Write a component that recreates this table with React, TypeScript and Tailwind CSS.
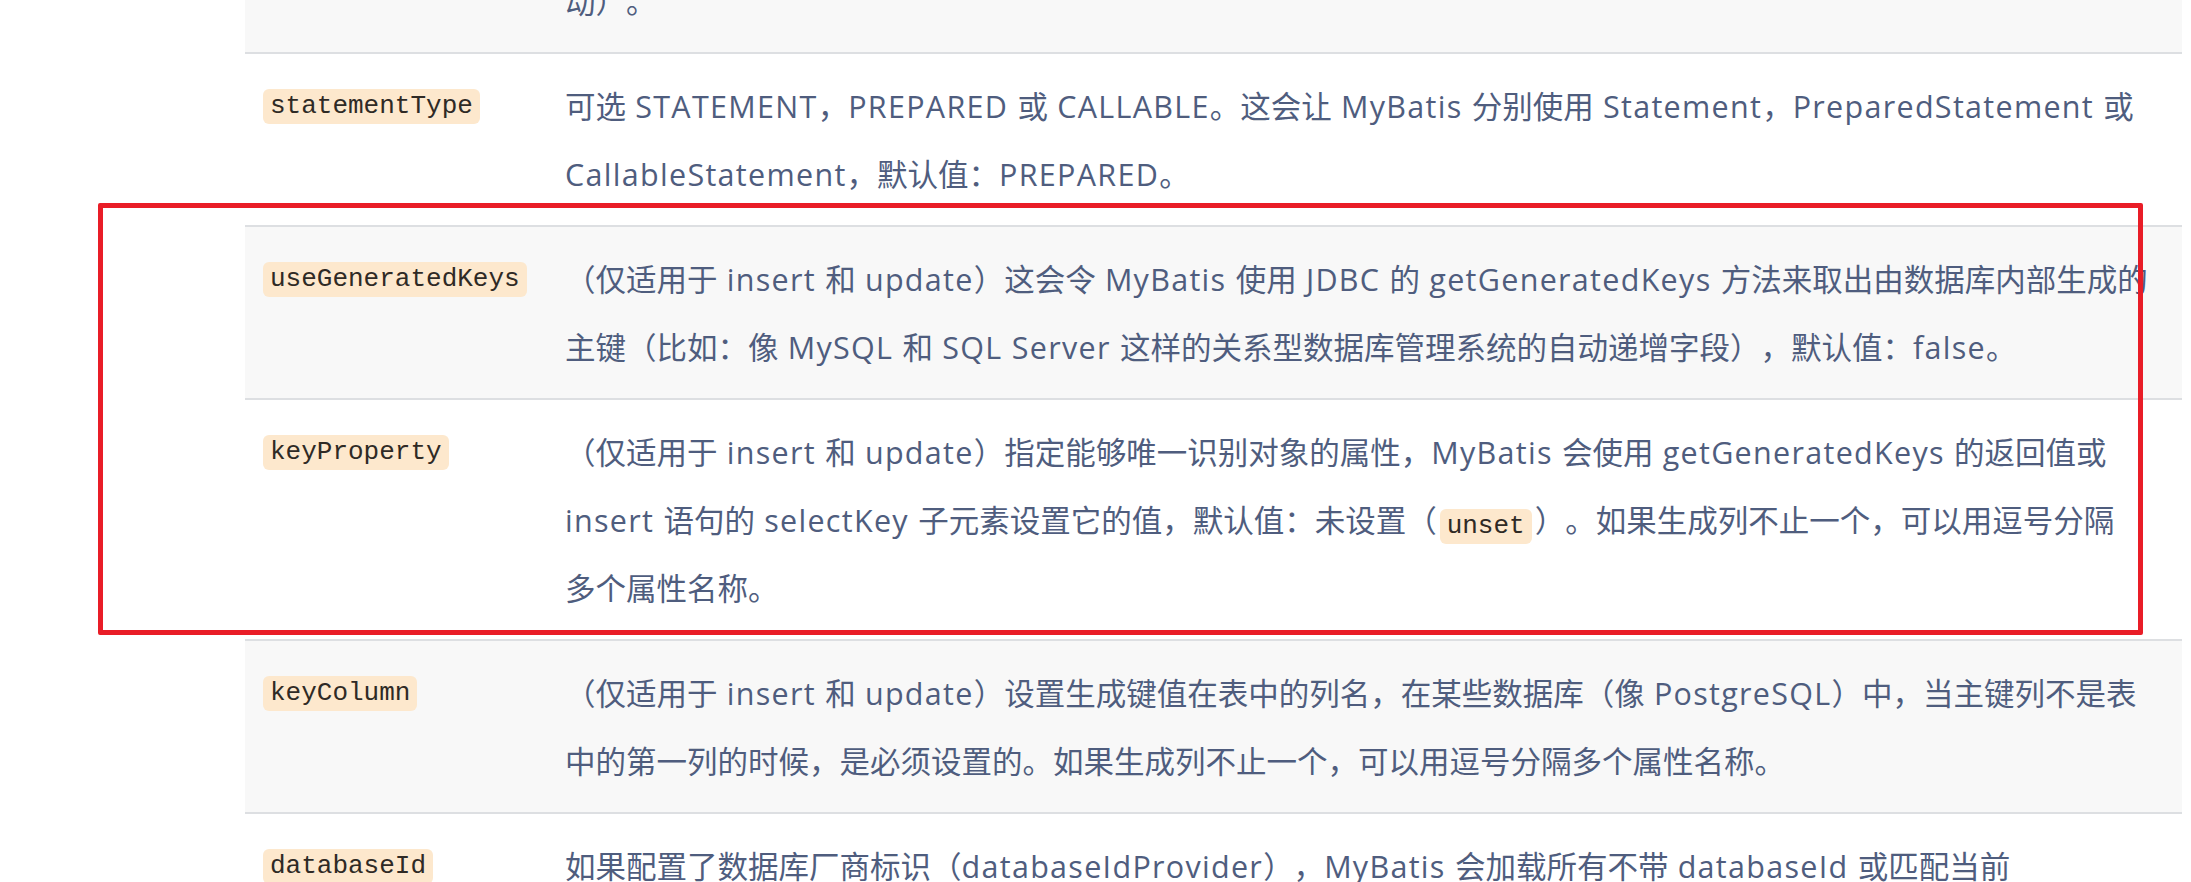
import React from 'react';

type Part = string | { code: string };

type Row = {
  name?: string;
  lines: Part[][];
  gray: boolean;
};

const rows: Row[] = [
  { lines: [['动）。']], gray: true },
  {
    name: 'statementType',
    gray: false,
    lines: [
      ['可选 STATEMENT，PREPARED 或 CALLABLE。这会让 MyBatis 分别使用 Statement，PreparedStatement 或'],
      ['CallableStatement，默认值：PREPARED。'],
    ],
  },
  {
    name: 'useGeneratedKeys',
    gray: true,
    lines: [
      ['（仅适用于 insert 和 update）这会令 MyBatis 使用 JDBC 的 getGeneratedKeys 方法来取出由数据库内部生成的'],
      ['主键（比如：像 MySQL 和 SQL Server 这样的关系型数据库管理系统的自动递增字段），默认值：false。'],
    ],
  },
  {
    name: 'keyProperty',
    gray: false,
    lines: [
      ['（仅适用于 insert 和 update）指定能够唯一识别对象的属性，MyBatis 会使用 getGeneratedKeys 的返回值或'],
      ['insert 语句的 selectKey 子元素设置它的值，默认值：未设置（', { code: 'unset' }, '）。如果生成列不止一个，可以用逗号分隔'],
      ['多个属性名称。'],
    ],
  },
  {
    name: 'keyColumn',
    gray: true,
    lines: [
      ['（仅适用于 insert 和 update）设置生成键值在表中的列名，在某些数据库（像 PostgreSQL）中，当主键列不是表'],
      ['中的第一列的时候，是必须设置的。如果生成列不止一个，可以用逗号分隔多个属性名称。'],
    ],
  },
  {
    name: 'databaseId',
    gray: false,
    lines: [['如果配置了数据库厂商标识（databaseIdProvider），MyBatis 会加载所有不带 databaseId 或匹配当前']],
  },
];

function Code({ children }: { children: string }) {
  return (
    <code className="inline-block h-[35px] rounded-[6px] bg-[#fde8cd] px-[7px] font-[Liberation_Mono,monospace] text-[26px] leading-[35px] text-[#2f2a25]">
      {children}
    </code>
  );
}

// les mots latins sont un peu plus larges dans la capture : on les espace légèrement
function Mixed({ text }: { text: string }) {
  const parts = text.split(/([A-Za-z0-9 .]+)/);
  return (
    <>
      {parts.map((p, i) =>
        /[A-Za-z]/.test(p) ? (
          <span key={i} className="tracking-[1.3px]">
            {p}
          </span>
        ) : (
          <span key={i}>{p}</span>
        )
      )}
    </>
  );
}

export default function App() {
  return (
    <main className="relative h-[882px] w-[2191px] overflow-hidden bg-white">
      {/* tableau des attributs (défilé, première ligne coupée) */}
      <div className="ml-[245px] mt-[-51px] w-[1937px]">
        {rows.map((row, i) => (
          <div
            key={i}
            className={`flex border-b-2 border-[#dddfe2] ${row.gray ? 'bg-[#f8f8f8]' : 'bg-white'}`}
          >
            <div className="w-[320px] shrink-0 pl-[18px] pt-[35px]">
              {row.name && <Code>{row.name}</Code>}
            </div>
            <div className="pt-[18px] pb-[17px] font-[Open_Sans,Noto_Sans_CJK_SC,sans-serif] text-[30.5px] leading-[68px] text-[#4f5d7e] [text-spacing-trim:space-all]">
              {row.lines.map((line, j) => (
                <div key={j} className="h-[68px] whitespace-nowrap">
                  {line.map((part, k) =>
                    typeof part === 'string' ? (
                      <Mixed key={k} text={part} />
                    ) : (
                      <span key={k} className="mx-[3px] inline-block align-middle leading-[35px]">
                        <Code>{part.code}</Code>
                      </span>
                    )
                  )}
                </div>
              ))}
            </div>
          </div>
        ))}
      </div>

      {/* cadre rouge d'annotation */}
      <div className="pointer-events-none absolute left-[98px] top-[203px] h-[432px] w-[2045px] rounded-[2px] border-[5px] border-[#e91d27]" />
    </main>
  );
}
